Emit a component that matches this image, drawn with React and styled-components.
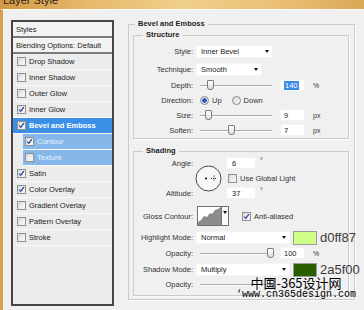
import React from 'react';
import styled, { createGlobalStyle } from 'styled-components';

const GlobalStyle = createGlobalStyle`
  html, body {
    margin: 0;
    padding: 0;
    background: #f0f0f0;
  }
  body {
    width: 364px;
    height: 310px;
    overflow: hidden;
    font-family: "Liberation Sans", Arial, sans-serif;
  }
`;

const styleRows = [
  { name: 'Drop Shadow' },
  { name: 'Inner Shadow' },
  { name: 'Outer Glow' },
  { name: 'Inner Glow', on: true },
  { name: 'Bevel and Emboss', on: true, sel: 'main' },
  { name: 'Contour', on: true, sel: 'sub' },
  { name: 'Texture', sel: 'sub' },
  { name: 'Satin', on: true },
  { name: 'Color Overlay', on: true },
  { name: 'Gradient Overlay' },
  { name: 'Pattern Overlay' },
  { name: 'Stroke' },
];

const Check = ({ on }) => (
  <CheckBox>
    {on && (
      <svg width="7" height="7" viewBox="0 0 7 7">
        <path d="M1.2 3.6 L2.8 5.3 L5.9 1.2" fill="none" stroke="#22409a" strokeWidth="1.2" />
      </svg>
    )}
  </CheckBox>
);

const Slider = ({ pos }) => (
  <Track>
    <Thumb $pos={pos} />
  </Track>
);

const Select = ({ w, value }) => (
  <SelectBox $w={w}>
    <span>{value}</span>
    <Caret />
  </SelectBox>
);

const App = () => {
  return (
    <Window>
      <GlobalStyle />
      <TitleBar>
        <TitleText>Layer Style</TitleText>
      </TitleBar>
      <Body>
        <StylePanel>
          <PanelHeader $h={14}>Styles</PanelHeader>
          <PanelHeader $h={14}>Blending Options: Default</PanelHeader>
          {styleRows.map((r) => (
            <StyleRow key={r.name} $sel={r.sel}>
              <Check on={r.on} />
              <span>{r.name}</span>
            </StyleRow>
          ))}
        </StylePanel>

        <Group $pad="0 5px 3px 4px" $mt={-1} $w={216}>
          <Legend $ml={2}>Bevel and Emboss</Legend>
          <Group $pad="5px 0 1px 0" $mt={1}>
            <Legend $ml={9}>Structure</Legend>
            <Row $h={13}>
              <Label>Style:</Label>
              <Select w={77} value="Inner Bevel" />
            </Row>
            <Row $h={13} $mt={5}>
              <Label>Technique:</Label>
              <Select w={66} value="Smooth" />
            </Row>
            <Row $h={14} $mt={2}>
              <Label>Depth:</Label>
              <Slider pos={10} />
              <NumBox><Selected>140</Selected></NumBox>
              <Unit>%</Unit>
            </Row>
            <Row $h={14} $mt={1}>
              <Label>Direction:</Label>
              <Radio $on />
              <RadioText>Up</RadioText>
              <Radio />
              <RadioText>Down</RadioText>
            </Row>
            <Row $h={14} $mt={1}>
              <Label>Size:</Label>
              <Slider pos={8} />
              <NumBox>9</NumBox>
              <Unit>px</Unit>
            </Row>
            <Row $h={14} $mt={1}>
              <Label>Soften:</Label>
              <Slider pos={31} />
              <NumBox>7</NumBox>
              <Unit>px</Unit>
            </Row>
          </Group>

          <Group $pad="1px 0 5px 0" $mt={7}>
            <Legend $ml={9}>Shading</Legend>
            <AngleBlock>
              <GridLabel $row="1">Angle:</GridLabel>
              <Dial>
                <svg width="27" height="27" viewBox="0 0 27 27">
                  <circle cx="13.5" cy="13.5" r="12.5" fill="#f7f7f7" stroke="#4a4a4a" strokeWidth="1" />
                  <circle cx="11" cy="13.5" r="1.1" fill="#111" />
                  <path d="M19 10.5 V16.5 M16 13.5 H22" stroke="#333" strokeWidth="1" strokeDasharray="1 1" />
                </svg>
              </Dial>
              <ValueLine $row="1">
                <SmallBox>6</SmallBox>
                <Degree>°</Degree>
              </ValueLine>
              <ValueLine $row="2">
                <CheckWrap $ml={2}>
                  <Check />
                  <span>Use Global Light</span>
                </CheckWrap>
              </ValueLine>
              <GridLabel $row="3">Altitude:</GridLabel>
              <ValueLine $row="3">
                <SmallBox>37</SmallBox>
                <Degree>°</Degree>
              </ValueLine>
            </AngleBlock>

            <Row $h={20} $mt={7}>
              <Label>Gloss Contour:</Label>
              <ContourBox>
                <svg width="23" height="18" viewBox="0 0 23 18">
                  <rect width="23" height="18" fill="#fff" />
                  <path d="M0 18 L0 15 L3 13 L6 9 L9 10 L12 6 L14 7 L17 3 L20 2 L23 0 L23 18 Z" fill="#8c8c8c" />
                </svg>
                <ContourArrow>
                  <Caret />
                </ContourArrow>
              </ContourBox>
              <CheckWrap $ml={13}>
                <Check on />
                <span>Anti-aliased</span>
              </CheckWrap>
            </Row>
            <Row $h={13} $mt={5}>
              <Label>Highlight Mode:</Label>
              <Select w={94} value="Normal" />
              <Swatch $c="#d0ff87" />
              <Hex>d0ff87</Hex>
            </Row>
            <Row $h={12} $mt={3}>
              <Label>Opacity:</Label>
              <Slider pos={70} />
              <NumBox>100</NumBox>
              <Unit>%</Unit>
            </Row>
            <Row $h={13} $mt={4}>
              <Label>Shadow Mode:</Label>
              <Select w={94} value="Multiply" />
              <Swatch $c="#2a5f00" />
              <Hex>2a5f00</Hex>
            </Row>
            <Row $h={12} $mt={2}>
              <Label>Opacity:</Label>
              <Slider pos={70} />
            </Row>
          </Group>
        </Group>
      </Body>

      <Watermark>
        <WaterCn>中国-365设计网</WaterCn>
        <WaterUrl>‘www.cn365design.com</WaterUrl>
      </Watermark>
    </Window>
  );
};

export default App;

const Window = styled.div`
  position: relative;
  width: 364px;
  height: 310px;
  display: flex;
  flex-direction: column;
  overflow: hidden;
`;

const TitleBar = styled.div`
  height: 9px;
  overflow: hidden;
  padding-left: 3px;
  background: linear-gradient(90deg, #d29a45 0%, #e6ba6a 25%, #f0cf8c 50%, #ebc177 75%, #d9a957 100%);
`;

const TitleText = styled.div`
  font-size: 11px;
  line-height: 11px;
  margin-top: -5px;
  color: #2a2218;
`;

const Body = styled.div`
  flex: 1;
  display: flex;
  align-items: flex-start;
  gap: 14px;
  padding: 10px 0 0 8px;
  background: #f0f0f0;
  border-left: 3px solid #d6a24e;
  border-top: 1px solid #fbfbfb;
`;

const StylePanel = styled.div`
  width: 99px;
  height: 282px;
  flex-shrink: 0;
  border: 2px solid #454545;
  background: #ececec;
  display: flex;
  flex-direction: column;
`;

const PanelHeader = styled.div`
  height: ${(p) => p.$h}px;
  display: flex;
  align-items: center;
  padding-left: 3px;
  font-size: 7.5px;
  color: #222;
  background: #f3f3f3;
  border-bottom: 2px solid #7a7a7a;
`;

const StyleRow = styled.div`
  height: 15px;
  display: flex;
  align-items: center;
  gap: 3px;
  padding-left: ${(p) => (p.$sel === 'sub' ? 2 : 4)}px;
  margin-left: ${(p) => (p.$sel === 'sub' ? 10 : 0)}px;
  border-bottom: 1px solid #fafafa;
  font-size: 7.5px;
  font-weight: ${(p) => (p.$sel === 'main' ? 'bold' : 'normal')};
  color: ${(p) => (p.$sel === 'main' ? '#fff' : p.$sel === 'sub' ? '#e8f2fc' : '#222')};
  background: ${(p) => (p.$sel === 'main' ? '#3b8fe7' : p.$sel === 'sub' ? '#86b7ea' : 'transparent')};
`;

const CheckBox = styled.span`
  width: 7px;
  height: 7px;
  flex-shrink: 0;
  border: 1px solid #8e8f8f;
  background: linear-gradient(135deg, #d8d8d8, #fcfcfc);
  display: flex;
  align-items: center;
  justify-content: center;
  box-sizing: content-box;
`;

const Group = styled.fieldset`
  margin: ${(p) => p.$mt || 0}px 0 0 0;
  padding: ${(p) => p.$pad};
  border: 1px solid #cbcbcb;
  box-shadow: 1px 1px 0 #fdfdfd;
  min-width: 0;
  flex-shrink: 0;
  width: ${(p) => (p.$w ? `${p.$w}px` : 'auto')};
`;

const Legend = styled.legend`
  padding: 0 3px;
  margin-left: ${(p) => p.$ml}px;
  font-size: 7.5px;
  line-height: 10px;
  font-weight: bold;
  color: #1e1e1e;
`;

const Row = styled.div`
  height: ${(p) => p.$h}px;
  margin-top: ${(p) => p.$mt || 0}px;
  display: flex;
  align-items: center;
  font-size: 7.5px;
  color: #333;
`;

const Label = styled.span`
  width: 59px;
  flex-shrink: 0;
  margin-right: 3px;
  text-align: right;
  font-size: 7.5px;
  color: #333;
  white-space: nowrap;
`;

const SelectBox = styled.div`
  width: ${(p) => p.$w}px;
  height: 13px;
  box-sizing: border-box;
  display: flex;
  align-items: center;
  justify-content: space-between;
  padding: 0 3px 0 4px;
  background: #fff;
  border: 1px solid #f4f4f4;
  font-size: 7.5px;
  color: #222;
  flex-shrink: 0;
`;

const Caret = styled.span`
  width: 0;
  height: 0;
  border-left: 2.5px solid transparent;
  border-right: 2.5px solid transparent;
  border-top: 3px solid #111;
`;

const Track = styled.div`
  position: relative;
  width: 72px;
  height: 12px;
  margin-left: 4px;
  flex-shrink: 0;
  &::before {
    content: '';
    position: absolute;
    left: 0;
    right: 0;
    top: 6px;
    height: 1px;
    background: #a9a9a9;
    border-bottom: 1px solid #fff;
  }
`;

const Thumb = styled.span`
  position: absolute;
  left: ${(p) => p.$pos - 3}px;
  top: 1px;
  width: 5px;
  height: 8px;
  border: 1px solid #7c7c7c;
  border-radius: 1px 1px 3px 3px;
  background: linear-gradient(#ffffff, #dcdcdc);
`;

const NumBox = styled.div`
  width: 25px;
  height: 12px;
  margin-left: 8px;
  box-sizing: border-box;
  padding-left: 3px;
  display: flex;
  align-items: center;
  background: #fff;
  border: 1px solid #f2f2f2;
  font-size: 7.5px;
  color: #222;
  flex-shrink: 0;
`;

const Selected = styled.span`
  background: #3a8de6;
  color: #fff;
  padding: 0 1px;
`;

const Unit = styled.span`
  margin-left: 8px;
  font-size: 7px;
  color: #333;
`;

const Radio = styled.span`
  width: 7px;
  height: 7px;
  margin-left: ${(p) => (p.$on ? 4 : 10)}px;
  border-radius: 50%;
  border: 1px solid #8a8a8a;
  background: ${(p) =>
    p.$on
      ? 'radial-gradient(circle, #2557b8 0 2px, #dfe6f2 2.5px)'
      : 'linear-gradient(135deg, #d6d6d6, #fbfbfb)'};
`;

const RadioText = styled.span`
  margin-left: 3px;
  font-size: 7.5px;
  color: #333;
`;

const AngleBlock = styled.div`
  display: grid;
  grid-template-columns: 59px 26px auto;
  grid-template-rows: 12px 18px 12px;
`;

const GridLabel = styled.span`
  grid-column: 1;
  grid-row: ${(p) => p.$row};
  align-self: center;
  text-align: right;
  font-size: 7.5px;
  color: #333;
`;

const Dial = styled.div`
  grid-column: 2;
  grid-row: 1 / 4;
  align-self: center;
  margin-left: 2px;
  height: 27px;
`;

const ValueLine = styled.div`
  grid-column: 3;
  grid-row: ${(p) => p.$row};
  display: flex;
  align-items: center;
  margin-left: 7px;
  font-size: 7.5px;
  color: #333;
`;

const SmallBox = styled.div`
  width: 30px;
  height: 12px;
  box-sizing: border-box;
  padding-left: 5px;
  display: flex;
  align-items: center;
  background: #fff;
  border: 1px solid #f2f2f2;
  font-size: 7.5px;
  color: #222;
`;

const Degree = styled.span`
  margin-left: 4px;
  align-self: flex-start;
  font-size: 7px;
  line-height: 8px;
`;

const CheckWrap = styled.div`
  display: flex;
  align-items: center;
  gap: 3px;
  margin-left: ${(p) => p.$ml}px;
  font-size: 7.5px;
  color: #333;
`;

const ContourBox = styled.div`
  display: flex;
  margin-left: 1px;
  height: 18px;
  border: 1px solid #6f6f6f;
  background: #fff;
`;

const ContourArrow = styled.div`
  width: 6px;
  border-left: 1px solid #6f6f6f;
  display: flex;
  align-items: flex-start;
  justify-content: center;
  padding-top: 4px;
  background: #fafafa;
`;

const Swatch = styled.span`
  width: 22px;
  height: 12px;
  margin-left: 3px;
  border: 1px solid #9a9a9a;
  background: ${(p) => p.$c};
  flex-shrink: 0;
`;

const Hex = styled.span`
  margin-left: 3px;
  font-size: 13px;
  line-height: 13px;
  color: #3a3a3a;
  white-space: nowrap;
`;

const Watermark = styled.div`
  position: absolute;
  left: 236px;
  top: 275px;
  width: 120px;
  display: flex;
  flex-direction: column;
  align-items: center;
  color: #000;
`;

const WaterCn = styled.div`
  font-family: "Noto Sans CJK SC", "Liberation Sans", sans-serif;
  font-size: 13px;
  line-height: 15px;
  white-space: nowrap;
`;

const WaterUrl = styled.div`
  font-family: "Liberation Mono", monospace;
  font-size: 10px;
  line-height: 10px;
  white-space: nowrap;
`;
